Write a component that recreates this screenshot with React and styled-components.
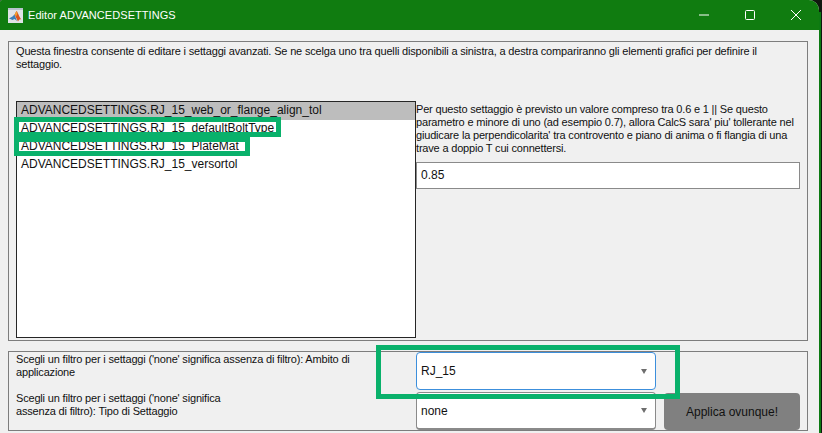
import React from "react";
import styled, { createGlobalStyle } from "styled-components";

const GlobalStyle = createGlobalStyle`
    html, body {
        margin: 0;
        padding: 0;
        background: #10180f;
    }
    body {
        width: 822px;
        height: 433px;
        overflow: hidden;
        font-family: "Liberation Sans", Arial, sans-serif;
        font-size: 12px;
        color: #111;
    }
`;

const Screen = styled.div`
    position: relative;
    width: 822px;
    height: 433px;
    overflow: hidden;
`;

const Window = styled.div`
    width: 819px;
    height: 433px;
    display: flex;
    flex-direction: column;
    background: #f0f0f0;
    border-radius: 2px 10px 0 0;
    overflow: hidden;
`;

const TitleBar = styled.div`
    height: 30px;
    flex: none;
    display: flex;
    align-items: center;
    background: #107c10;
    color: #fff;
    padding-left: 8px;
`;

const TitleText = styled.span`
    margin-left: 5px;
    font-size: 11px;
    letter-spacing: 0.05px;
`;

const WindowButtons = styled.div`
    margin-left: auto;
    display: flex;
`;

const WindowButton = styled.div`
    width: 46px;
    height: 30px;
    display: flex;
    align-items: center;
    justify-content: center;
`;

const Body = styled.div`
    flex: 1;
    display: flex;
    flex-direction: column;
    gap: 10px;
    padding: 11px 11px 2px 8px;
`;

const Panel = styled.div`
    box-sizing: border-box;
    border: 1px solid #7d7d7d;
    height: ${(props) => props.height}px;
`;

const TopPanel = styled(Panel)`
    padding: 3px 7px 0;
    display: grid;
    grid-template-columns: 400px 384px;
    grid-template-rows: 56px 1fr;
`;

const Intro = styled.div`
    grid-column: 1 / 3;
    font-size: 11px;
    letter-spacing: -0.17px;
    line-height: 13px;
`;

const ListBox = styled.div`
    box-sizing: border-box;
    height: 237px;
    background: #fff;
    border: 1px solid #262626;
`;

const ListItem = styled.div`
    height: 18px;
    line-height: 16px;
    padding-left: 4px;
    background: ${(props) => (props.selected ? "#bdbdbd" : "transparent")};
`;

const DetailColumn = styled.div`
    display: flex;
    flex-direction: column;
`;

const Description = styled.div`
    height: 61px;
    padding-top: 2px;
    box-sizing: border-box;
    font-size: 11px;
    letter-spacing: -0.18px;
    line-height: 13px;
`;

const TextField = styled.div`
    box-sizing: border-box;
    height: 27px;
    line-height: 25px;
    padding-left: 4px;
    background: #fff;
    border: 1px solid #8a8a8a;
`;

const BottomPanel = styled(Panel)`
    padding: 0 7px;
    display: grid;
    grid-template-columns: 400px 240px 144px;
    grid-template-rows: 38px 38px;
    row-gap: 2px;
`;

const FilterLabel = styled.div`
    font-size: 11px;
    letter-spacing: -0.18px;
    line-height: 13px;
    max-width: 345px;
    padding-top: ${(props) => props.top}px;
`;

const Select = styled.div`
    box-sizing: border-box;
    display: flex;
    align-items: center;
    justify-content: space-between;
    padding: 0 8px 0 4px;
    background: #fff;
    border: 1px solid ${(props) => (props.focused ? "#3c8fdc" : "#8a8a8a")};
    border-bottom-width: ${(props) => (props.focused ? 1 : 2)}px;
    border-radius: 4px;
`;

const Arrow = styled.span`
    width: 0;
    height: 0;
    border-left: 3.5px solid transparent;
    border-right: 3.5px solid transparent;
    border-top: 5px solid #6e6e6e;
`;

const ApplyButton = styled.div`
    margin-left: 8px;
    display: flex;
    align-items: center;
    justify-content: center;
    background: #808080;
    border-radius: 4px;
    height: 37px;
    margin-top: 1px;
`;

const Highlight = styled.div`
    position: absolute;
    box-sizing: border-box;
    left: ${(props) => props.x}px;
    top: ${(props) => props.y}px;
    width: ${(props) => props.w}px;
    height: ${(props) => props.h}px;
    border: 5px solid #09b16b;
`;

const EdgeLine = styled.div`
    position: absolute;
    left: 819px;
    top: 12px;
    bottom: 0;
    width: 2px;
    background: #0c7a12;
`;

function MatlabIcon() {
    return (
        <svg width="15" height="15" viewBox="0 0 15 15">
            <rect x="0" y="0" width="15" height="15" fill="#dfe3e6" />
            <rect x="0" y="0" width="15" height="2" fill="#b8c4cc" />
            <path d="M1 10.5l3.5-2 2-2 2.5 6.5-2.5-2-2 1z" fill="#3a7fb8" />
            <path d="M6.5 6.5l2-3.5c1.5 1 2.5 6 5 8.5-1.5-.5-2.5 0-3.5 2z" fill="#d9541e" />
            <path d="M6.5 6.5l2-3.5 1 2.5-1.5 3z" fill="#f0a030" />
        </svg>
    );
}

export default function App() {
    return (
        <Screen>
            <GlobalStyle />
            <Window>
                <TitleBar>
                    <MatlabIcon />
                    <TitleText>Editor ADVANCEDSETTINGS</TitleText>
                    <WindowButtons>
                        <WindowButton>
                            <svg width="10" height="10" viewBox="0 0 10 10">
                                <path d="M0 5h10" stroke="#fff" fill="none" />
                            </svg>
                        </WindowButton>
                        <WindowButton>
                            <svg width="10" height="10" viewBox="0 0 10 10">
                                <rect x=".5" y=".5" width="9" height="9" rx="1" stroke="#fff" fill="none" />
                            </svg>
                        </WindowButton>
                        <WindowButton>
                            <svg width="10" height="10" viewBox="0 0 10 10">
                                <path d="M0 0l10 10M10 0L0 10" stroke="#fff" fill="none" />
                            </svg>
                        </WindowButton>
                    </WindowButtons>
                </TitleBar>
                <Body>
                    <TopPanel height={300}>
                        <Intro>
                            Questa finestra consente di editare i settaggi avanzati. Se ne scelga uno tra quelli disponibili a sinistra, a destra compariranno gli elementi grafici per definire il settaggio.
                        </Intro>
                        <ListBox>
                            <ListItem selected>ADVANCEDSETTINGS.RJ_15_web_or_flange_align_tol</ListItem>
                            <ListItem>ADVANCEDSETTINGS.RJ_15_defaultBoltType</ListItem>
                            <ListItem>ADVANCEDSETTINGS.RJ_15_PlateMat</ListItem>
                            <ListItem>ADVANCEDSETTINGS.RJ_15_versortol</ListItem>
                        </ListBox>
                        <DetailColumn>
                            <Description>
                                Per questo settaggio è previsto un valore compreso tra 0.6 e 1 || Se questo parametro e minore di uno (ad esempio 0.7), allora CalcS sara' piu' tollerante nel giudicare la perpendicolarita' tra controvento e piano di anima o fi flangia di una trave a doppio T cui connettersi.
                            </Description>
                            <TextField>0.85</TextField>
                        </DetailColumn>
                    </TopPanel>
                    <BottomPanel height={80}>
                        <FilterLabel top={1}>
                            Scegli un filtro per i settaggi ('none' significa assenza di filtro): Ambito di applicazione
                        </FilterLabel>
                        <Select focused>
                            RJ_15
                            <Arrow />
                        </Select>
                        <span />
                        <FilterLabel top={0}>
                            Scegli un filtro per i settaggi ('none' significa
                            <br />
                            assenza di filtro): Tipo di Settaggio
                        </FilterLabel>
                        <Select>
                            none
                            <Arrow />
                        </Select>
                        <ApplyButton>Applica ovunque!</ApplyButton>
                    </BottomPanel>
                </Body>
            </Window>
            <EdgeLine />
            <Highlight x={14} y={117} w={267} h={20} />
            <Highlight x={14} y={137} w={236} h={19} />
            <Highlight x={376} y={345} w={304} h={54} />
        </Screen>
    );
}
